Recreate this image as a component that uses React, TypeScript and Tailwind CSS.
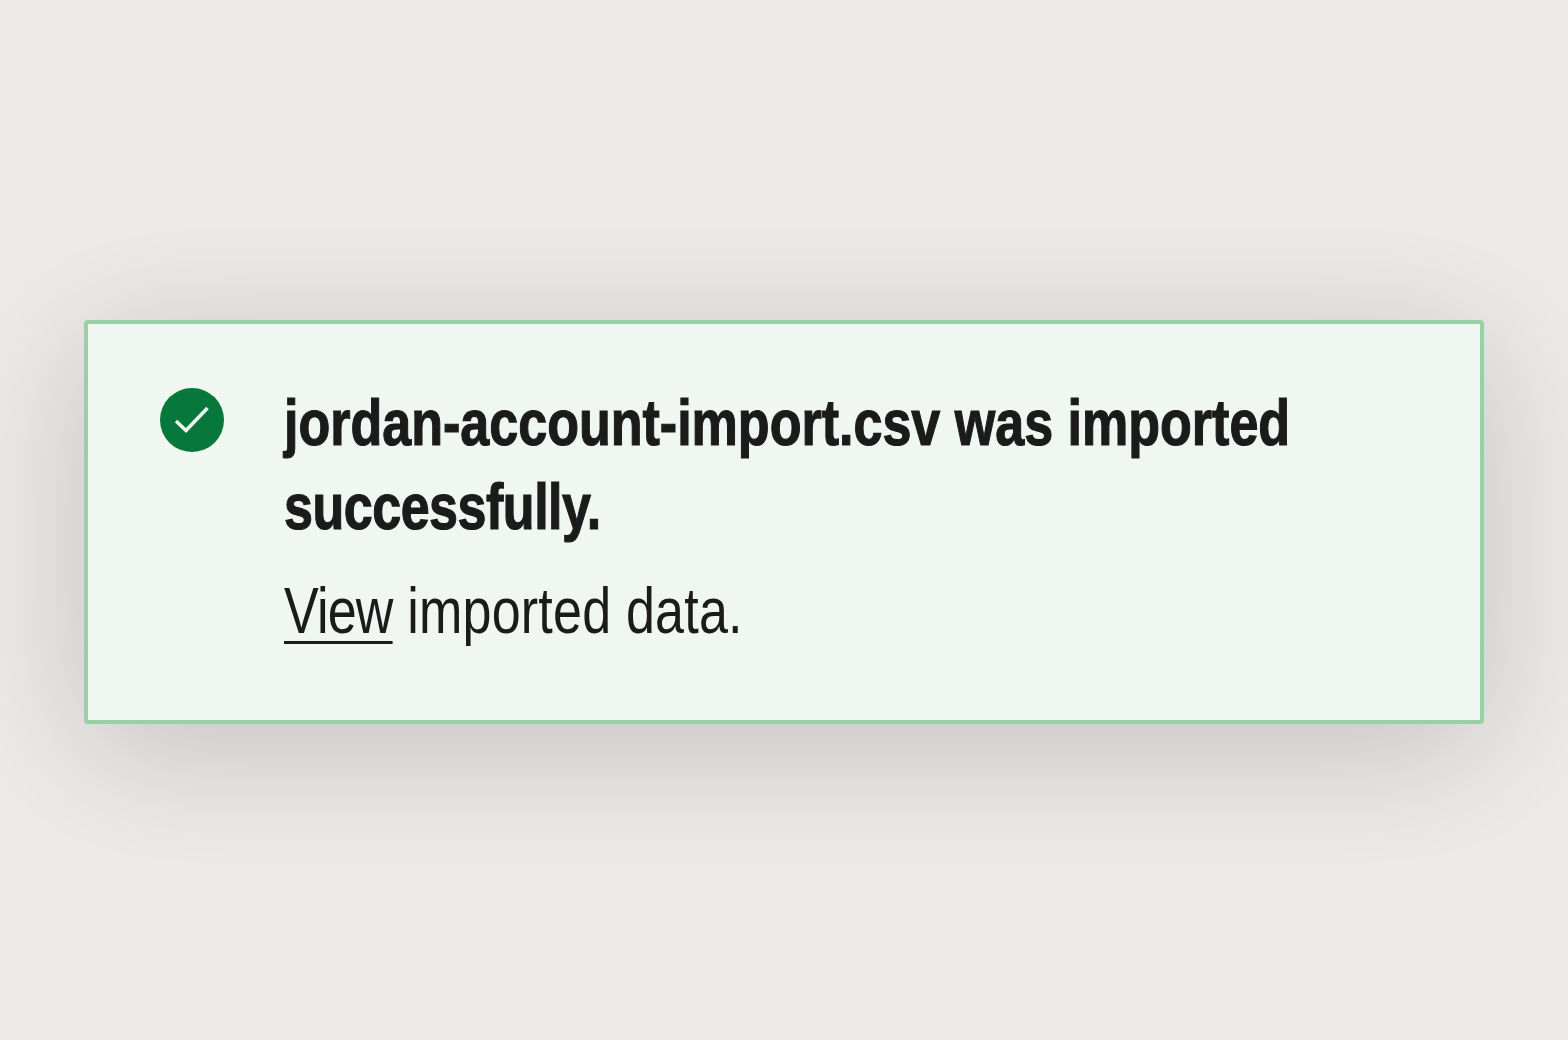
export default function App() {
  return (
    <div className="w-full h-[1040px] bg-[#ecebe9] flex items-center justify-center font-['Liberation_Sans',sans-serif] pt-[4px] overflow-hidden">
      <div className="w-[1400px] h-[404px] bg-[#f0f7f1] border-[4px] border-[#9bd0a7] rounded-[4px] shadow-[0_24px_140px_rgba(0,0,0,0.18)] pl-[72px] pt-[57px] flex gap-[60px]">
        <div className="w-[64px] h-[64px] mt-[7px] rounded-full bg-[#08773b] shrink-0">
          <svg width="64" height="64" viewBox="0 0 64 64" fill="none" stroke="#f0f7f1" strokeWidth="3.5">
            <path d="M16 33 L26 42.5 L47.5 20" />
          </svg>
        </div>
        <div className="w-[1300px] shrink-0 flex flex-col text-[#1b1b1b] origin-left scale-x-[0.813]">
          <p className="font-bold text-[64px] leading-[84px] [-webkit-text-stroke:1.2px_#1b1b1b]">
            jordan-account-import.csv was imported <span className="tracking-[-0.6px]">successfully.</span>
          </p>
          <p className="text-[64px] leading-[84px] mt-[20px] tracking-[0.25px]">
            <span className="underline underline-offset-[8px] decoration-[3px] tracking-[-1px]">View</span> imported data.
          </p>
        </div>
      </div>
    </div>
  );
}
